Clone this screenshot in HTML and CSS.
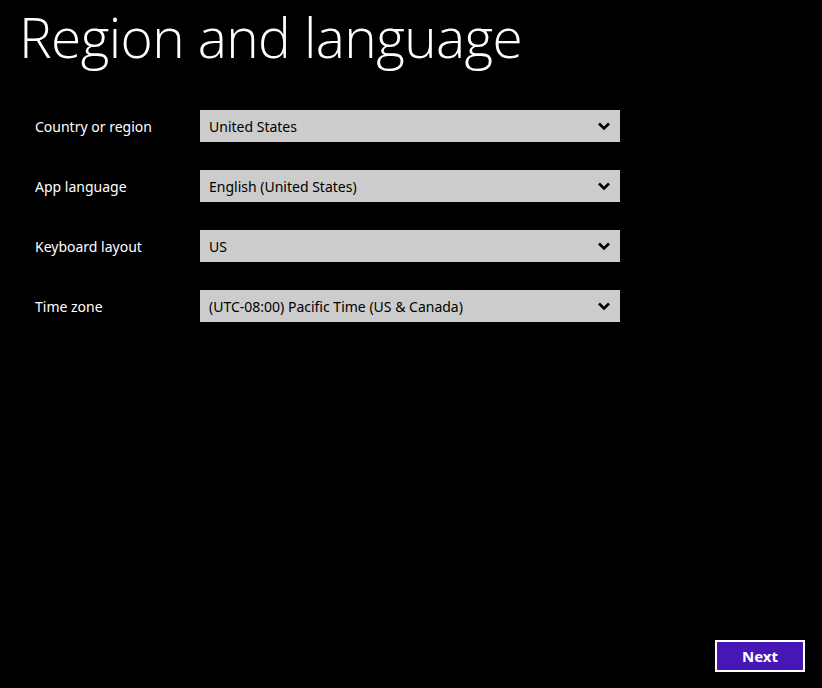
FILE: index.html
```html
<!DOCTYPE html>
<html>
<head>
<meta charset="utf-8">
<link rel="stylesheet" href="styles.css">
</head>
<body>
<div class="page">
  <h1 class="title">Region and language</h1>
  <div class="form">
    <div class="row">
      <span class="label">Country or region</span>
      <div class="select"><span class="value">United States</span><svg class="chev" width="12" height="9" viewBox="0 0 12 9"><path d="M1 1.5 L6 6.5 L11 1.5" fill="none" stroke="#000" stroke-width="2.6"/></svg></div>
    </div>
    <div class="row">
      <span class="label">App language</span>
      <div class="select"><span class="value">English (United States)</span><svg class="chev" width="12" height="9" viewBox="0 0 12 9"><path d="M1 1.5 L6 6.5 L11 1.5" fill="none" stroke="#000" stroke-width="2.6"/></svg></div>
    </div>
    <div class="row">
      <span class="label">Keyboard layout</span>
      <div class="select"><span class="value">US</span><svg class="chev" width="12" height="9" viewBox="0 0 12 9"><path d="M1 1.5 L6 6.5 L11 1.5" fill="none" stroke="#000" stroke-width="2.6"/></svg></div>
    </div>
    <div class="row">
      <span class="label">Time zone</span>
      <div class="select"><span class="value">(UTC-08:00) Pacific Time (US &amp; Canada)</span><svg class="chev" width="12" height="9" viewBox="0 0 12 9"><path d="M1 1.5 L6 6.5 L11 1.5" fill="none" stroke="#000" stroke-width="2.6"/></svg></div>
    </div>
  </div>
  <div class="footer">
    <button class="next">Next</button>
  </div>
</div>
</body>
</html>
```
FILE: styles.css
```css
html, body {
  margin: 0;
  padding: 0;
  background: #000;
  width: 822px;
  height: 688px;
  overflow: hidden;
}
.page {
  height: 688px;
  display: flex;
  flex-direction: column;
  font-family: "Noto Sans", "Open Sans", sans-serif;
  color: #fff;
}
.title {
  margin: 0;
  padding: 0 0 0 19px;
  height: 80px;
  font-family: "Open Sans", sans-serif;
  font-weight: 300;
  font-size: 55px;
  line-height: 74px;
  letter-spacing: -0.6px;
}
.form {
  padding: 30px 0 0 35px;
  display: flex;
  flex-direction: column;
  gap: 28px;
}
.row {
  display: flex;
  align-items: center;
  height: 32px;
}
.label {
  width: 165px;
  font-size: 14px;
}
.select {
  width: 420px;
  height: 32px;
  background: #cccccc;
  color: #000;
  display: flex;
  align-items: center;
  justify-content: space-between;
  padding: 0 10px 0 9px;
  box-sizing: border-box;
  font-size: 14px;
}
.chev {
  display: block;
}
.footer {
  margin-top: auto;
  display: flex;
  justify-content: flex-end;
  padding: 0 17px 16px 0;
}
.next {
  width: 90px;
  height: 32px;
  background: #4617b4;
  border: 2px solid #fff;
  color: #fff;
  font-family: "Noto Sans", sans-serif;
  font-weight: 700;
  font-size: 15px;
  padding: 0;
}
```
